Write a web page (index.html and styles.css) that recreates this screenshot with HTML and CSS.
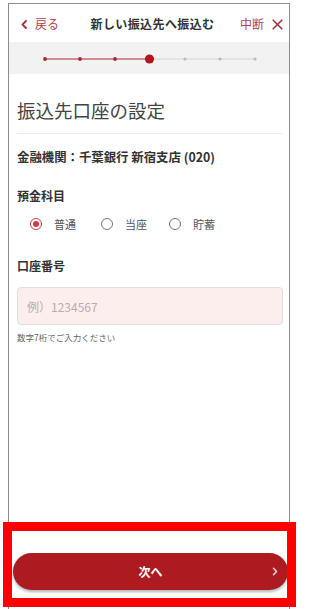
FILE: index.html
```html
<!DOCTYPE html>
<html lang="ja">
<head>
<meta charset="utf-8">
<link rel="stylesheet" href="styles.css">
</head>
<body>
<div class="screen">
  <header class="header">
    <div class="back">
      <svg class="chev" width="6" height="9" viewBox="0 0 6 9"><path d="M5 1 L1.5 4.5 L5 8" fill="none" stroke="#a8323a" stroke-width="1.8" stroke-linecap="round" stroke-linejoin="round"/></svg>
      <span>戻る</span>
    </div>
    <div class="title">新しい振込先へ振込む</div>
    <div class="stop">
      <span>中断</span>
      <svg width="11" height="11" viewBox="0 0 11 11"><path d="M1.2 1.2 L9.8 9.8 M9.8 1.2 L1.2 9.8" stroke="#a8323a" stroke-width="1.6" stroke-linecap="round"/></svg>
    </div>
  </header>
  <div class="progress">
    <svg width="280" height="32" viewBox="0 0 280 32">
      <line x1="36" y1="17" x2="141" y2="17" stroke="#a8262c" stroke-width="1.2"/>
      <line x1="141" y1="17" x2="246" y2="17" stroke="#d4d4d4" stroke-width="1.2"/>
      <circle cx="36" cy="17" r="1.9" fill="#a8262c"/>
      <circle cx="71" cy="17" r="1.9" fill="#a8262c"/>
      <circle cx="106" cy="17" r="1.9" fill="#a8262c"/>
      <circle cx="140.5" cy="17" r="4.6" fill="#b3161c"/>
      <circle cx="176" cy="17" r="1.6" fill="#b8b8b8"/>
      <circle cx="211" cy="17" r="1.6" fill="#b8b8b8"/>
      <circle cx="246" cy="17" r="1.6" fill="#b8b8b8"/>
    </svg>
  </div>
  <main class="content">
    <h1 class="page-title">振込先口座の設定</h1>
    <div class="divider"></div>
    <p class="bank">金融機関：千葉銀行 新宿支店 (020)</p>
    <p class="label label-type">預金科目</p>
    <div class="radios">
      <div class="radio radio-a"><span class="dot on"></span><span class="rlabel">普通</span></div>
      <div class="radio radio-b"><span class="dot"></span><span class="rlabel">当座</span></div>
      <div class="radio"><span class="dot"></span><span class="rlabel">貯蓄</span></div>
    </div>
    <p class="label label-num">口座番号</p>
    <div class="input"><span class="placeholder">例）1234567</span></div>
    <p class="help">数字7桁でご入力ください</p>
  </main>
  <footer class="footer">
    <button class="next">
      <span>次へ</span>
      <svg class="next-chev" width="6" height="9" viewBox="0 0 6 9"><path d="M1.5 1.2 L4.5 4.5 L1.5 7.8" fill="none" stroke="#f3d6d6" stroke-width="1.5" stroke-linecap="round" stroke-linejoin="round"/></svg>
    </button>
  </footer>
</div>
<div class="highlight"></div>
</body>
</html>
```

FILE: styles.css
```css
* { box-sizing: border-box; }
html, body { margin: 0; padding: 0; }
body {
  width: 300px;
  height: 609px;
  overflow: hidden;
  background: #fff;
  position: relative;
  font-family: "Noto Sans CJK JP", "Noto Sans", sans-serif;
  color: #333;
}
.screen {
  margin: 3px 0 0 8px;
  width: 282px;
  height: 606px;
  border: 1px solid #8c8c8c;
  border-bottom: none;
  display: flex;
  flex-direction: column;
}
.header {
  height: 38px;
  display: flex;
  align-items: center;
  justify-content: space-between;
  padding: 2px 6px 0 12px;
  font-size: 12px;
  line-height: 16px;
}
.back, .stop {
  display: flex;
  align-items: center;
  color: #b0424a;
}
.back .chev { margin-right: 8px; }
.stop span { margin-right: 8px; }
.title {
  font-weight: bold;
  color: #333;
  letter-spacing: 0.4px;
  margin-left: 6px;
}
.progress {
  height: 32px;
  background: #f2f2f2;
}
.progress svg { display: block; }
.content {
  padding: 0 6px 0 8px;
}
.page-title {
  margin: 24px 0 0;
  font-size: 18.5px;
  line-height: 24px;
  font-weight: normal;
  color: #444;
}
.divider {
  margin-top: 11px;
  border-top: 1.5px solid #ececec;
}
.bank {
  margin: 15px 0 0;
  font-size: 12.4px;
  line-height: 16px;
  font-weight: bold;
  color: #333;
}
.label {
  margin: 0;
  font-size: 12px;
  line-height: 16px;
  font-weight: bold;
  color: #333;
}
.label-type { margin-top: 23px; }
.label-num { margin-top: 26px; }
.radios {
  margin-top: 12px;
  height: 16px;
  display: flex;
  align-items: center;
  padding-left: 13px;
}
.radio {
  display: flex;
  align-items: center;
}
.radio-a { width: 71px; }
.radio-b { width: 68px; }
.dot {
  width: 12px;
  height: 12px;
  border: 1.5px solid #777;
  border-radius: 50%;
  display: flex;
  align-items: center;
  justify-content: center;
  margin-right: 12px;
}
.dot.on { border-color: #d23a3e; }
.dot.on::after {
  content: "";
  width: 6px;
  height: 6px;
  border-radius: 50%;
  background: #d23a3e;
}
.rlabel {
  font-size: 11px;
  line-height: 16px;
  color: #555;
}
.input {
  margin-top: 13px;
  height: 38px;
  border: 1px solid #ddd;
  border-radius: 4px;
  background: #fdeeee;
  display: flex;
  align-items: center;
  padding-left: 9px;
}
.placeholder {
  font-size: 12px;
  color: #bdaaaa;
}
.help {
  margin: 6px 0 0;
  font-size: 8.5px;
  line-height: 12px;
  color: #666;
}
.footer {
  margin-top: auto;
  padding: 0 1px 19px 4px;
}
.next {
  width: 100%;
  height: 37px;
  border: none;
  border-radius: 19px;
  background: #ad1a1f;
  box-shadow: 0 2px 3px rgba(0,0,0,0.3);
  color: #fff;
  font-family: inherit;
  font-size: 12px;
  font-weight: bold;
  display: flex;
  align-items: center;
  justify-content: center;
  position: relative;
  padding: 0;
}
.next-chev {
  position: absolute;
  right: 10px;
  top: 14px;
}
.highlight {
  position: absolute;
  left: 3px;
  top: 522px;
  width: 293px;
  height: 85px;
  border: 9px solid #ff0000;
}
```
